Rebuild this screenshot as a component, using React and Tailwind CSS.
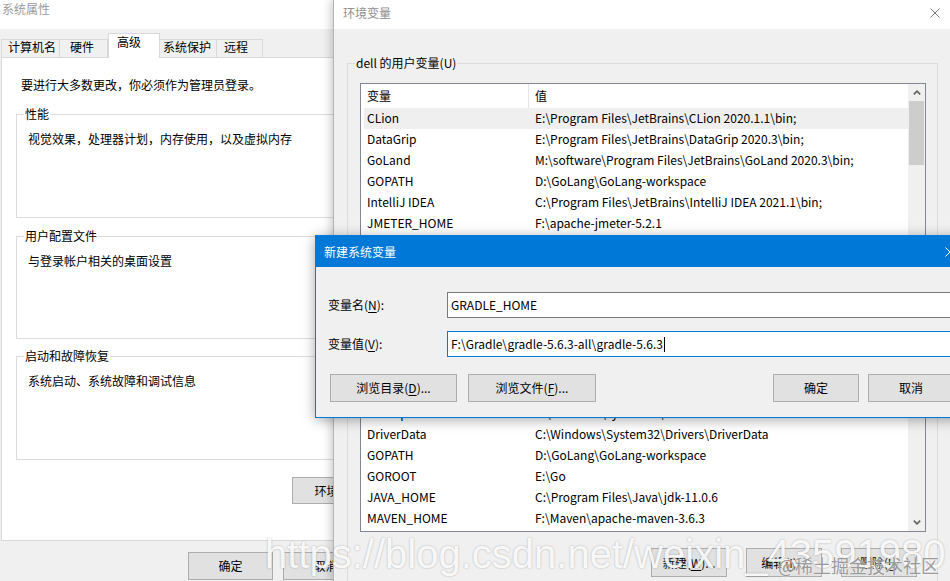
import React from 'react';

const userVars = [
  ['CLion', 'E:\\Program Files\\JetBrains\\CLion 2020.1.1\\bin;'],
  ['DataGrip', 'E:\\Program Files\\JetBrains\\DataGrip 2020.3\\bin;'],
  ['GoLand', 'M:\\software\\Program Files\\JetBrains\\GoLand 2020.3\\bin;'],
  ['GOPATH', 'D:\\GoLang\\GoLang-workspace'],
  ['IntelliJ IDEA', 'C:\\Program Files\\JetBrains\\IntelliJ IDEA 2021.1\\bin;'],
  ['JMETER_HOME', 'F:\\apache-jmeter-5.2.1'],
  ['OneDrive', 'C:\\Users\\dell\\OneDrive'],
  ['Path', 'C:\\Users\\dell\\AppData\\Local\\Microsoft\\WindowsApps;'],
];

const systemVars = [
  ['ComSpec', 'C:\\Windows\\system32\\cmd.exe'],
  ['DriverData', 'C:\\Windows\\System32\\Drivers\\DriverData'],
  ['GOPATH', 'D:\\GoLang\\GoLang-workspace'],
  ['GOROOT', 'E:\\Go'],
  ['JAVA_HOME', 'C:\\Program Files\\Java\\jdk-11.0.6'],
  ['MAVEN_HOME', 'F:\\Maven\\apache-maven-3.6.3'],
];

const Key = ({ children }) => <span className="underline underline-offset-[2px]">{children}</span>;

const Button = ({ className = '', children }) => (
  <div className={`flex shrink-0 items-center justify-center border border-[#adadad] bg-[#e1e1e1] whitespace-nowrap ${className}`}>
    {children}
  </div>
);

const Chevron = ({ down }) => (
  <svg width="8" height="5" viewBox="0 0 8 5" className={down ? 'rotate-180' : ''}>
    <path d="M0.8 4.4 L4 1.2 L7.2 4.4" fill="none" stroke="#606060" strokeWidth="1.6" />
  </svg>
);

const CloseX = ({ color }) => (
  <svg width="10" height="10" viewBox="0 0 10 10">
    <path d="M0.5 0.5 L9.5 9.5 M9.5 0.5 L0.5 9.5" stroke={color} strokeWidth="1" />
  </svg>
);

const Group = ({ title, text, className = '' }) => (
  <fieldset className={`shrink-0 border border-[#dcdcdc] px-[7px] ${className}`}>
    <legend className="px-[1px]">{title}</legend>
    <p className="mt-[9px] px-[4px]">{text}</p>
  </fieldset>
);

const Row = ({ name, value, selected }) => (
  <div className={`ml-[3px] flex h-[21px] shrink-0 items-center pb-[1px] ${selected ? 'bg-[#efefef]' : ''}`}>
    <div className="w-[164px] shrink-0 whitespace-nowrap pl-[3px]">{name}</div>
    <div className="whitespace-nowrap pl-[7px]">{value}</div>
  </div>
);

const VarList = ({ rows, className = '', toEnd, selected = -1 }) => (
  <div className={`flex border border-[#828790] bg-white ${className}`}>
    <div className="flex min-w-0 flex-1 flex-col overflow-hidden">
      <div className="flex h-[24px] shrink-0">
        <div className="flex w-[168px] items-center border-r border-[#e5e5e5] pb-[1px] pl-[6px]">变量</div>
        <div className="flex items-center pb-[1px] pl-[6px]">值</div>
      </div>
      <div className={`flex min-h-0 flex-1 flex-col overflow-hidden ${toEnd ? 'justify-end pb-[2px]' : ''}`}>
        {rows.map(([n, v], i) => (
          <Row key={n + i} name={n} value={v} selected={i === selected} />
        ))}
      </div>
    </div>
    <div className="flex w-[17px] shrink-0 flex-col bg-[#f0f0f0]">
      <div className="flex h-[17px] items-center justify-center">
        <Chevron />
      </div>
      {toEnd ? (
        <>
          <div className="flex-1" />
          <div className="flex h-[17px] items-center justify-center">
            <Chevron down />
          </div>
        </>
      ) : (
        <div className="mx-[1px] h-[64px] bg-[#cdcdcd]" />
      )}
    </div>
  </div>
);

const tabs = [
  { label: '计算机名', cls: 'w-[59px] border-l pl-[6px]' },
  { label: '硬件', cls: 'w-[48px] pl-[10px]' },
  { label: '高级', active: true },
  { label: '系统保护', cls: 'w-[57px] pl-[3px]' },
  { label: '远程', cls: 'w-[46px] pl-[7px]' },
];

const SystemProperties = () => (
  <div className="absolute left-0 top-0 flex h-[581px] w-[474px] flex-col bg-[#f0f0f0]">
    <div className="h-[29px] shrink-0 bg-white pl-[2px] pt-[1px] text-[#9b9b9b]">系统属性</div>

    {/* Tabs */}
    <div className="mt-[4px] flex h-[24px] shrink-0 items-end pl-[1px]">
      {tabs.map((t) =>
        t.active ? (
          <div
            key={t.label}
            className="relative z-10 -mb-[1px] h-[25px] w-[52px] border-x border-t border-[#d9d9d9] bg-white pl-[8px] pt-[1px] leading-[14px]"
          >
            {t.label}
          </div>
        ) : (
          <div
            key={t.label}
            className={`h-[18px] border-r border-t border-[#d9d9d9] bg-[#f0f0f0] leading-[14px] ${t.cls}`}
          >
            {t.label}
          </div>
        )
      )}
    </div>

    {/* Panel */}
    <div className="ml-[1px] mr-[7px] flex h-[484px] shrink-0 flex-col border border-[#d9d9d9] bg-white px-[14px] pt-[19px]">
      <p className="ml-[5px]">要进行大多数更改，你必须作为管理员登录。</p>
      <Group className="mt-[13px] h-[112px]" title="性能" text="视觉效果，处理器计划，内存使用，以及虚拟内存" />
      <Group className="mt-[10px] h-[111px]" title="用户配置文件" text="与登录帐户相关的桌面设置" />
      <Group className="mt-[9px] h-[112px]" title="启动和故障恢复" text="系统启动、系统故障和调试信息" />
      <Button className="ml-[276px] mt-[17px] h-[27px] w-[120px]">
        环境变量(<Key>N</Key>)...
      </Button>
    </div>

    <div className="mt-[11px] flex justify-end gap-[10px] pr-[11px]">
      <Button className="h-[28px] w-[85px]">确定</Button>
      <Button className="h-[28px] w-[85px]">取消</Button>
      <Button className="h-[28px] w-[85px]">应用(<Key>A</Key>)</Button>
    </div>
  </div>
);

const EnvironmentVariables = () => (
  <div className="absolute left-[333px] top-0 flex h-[581px] w-[620px] flex-col border-l border-[#b4b4b4] bg-[#f0f0f0] shadow-[-3px_0_8px_rgba(0,0,0,0.18)]">
    <div className="flex h-[29px] shrink-0 items-start justify-between bg-white pl-[9px] pr-[13px] pt-[5px] text-[#8f8f8f]">
      <span>环境变量</span>
      <span className="pt-[3px]">
        <CloseX color="#7a7a7a" />
      </span>
    </div>

    <div className="flex flex-1 flex-col pl-[13px] pr-[15px] pt-[26px]">
      <fieldset className="border border-[#dcdcdc] px-[7px] pb-[10px]">
        <legend className="px-[1px]">dell 的用户变量(U)</legend>
        <VarList rows={userVars} selected={0} className="ml-[5px] mr-[4px] mt-[12px] h-[190px]" />
        <div className="mr-[13px] mt-[10px] flex justify-end gap-[19px]">
          <Button className="h-[28px] w-[76px]">新建(<Key>N</Key>)...</Button>
          <Button className="h-[28px] w-[76px]">编辑(<Key>E</Key>)...</Button>
          <Button className="h-[28px] w-[76px]">删除(<Key>D</Key>)</Button>
        </div>
      </fieldset>

      <fieldset className="mt-[10px] border border-[#dcdcdc] px-[7px] pb-[10px]">
        <legend className="px-[1px]">系统变量(S)</legend>
        <VarList rows={systemVars} toEnd className="ml-[5px] mr-[4px] mt-[12px] h-[172px]" />
        <div className="mr-[13px] mt-[16px] flex justify-end gap-[19px]">
          <Button className="h-[29px] w-[76px]">新建(<Key>W</Key>)...</Button>
          <Button className="h-[29px] w-[76px]">编辑(<Key>I</Key>)...</Button>
          <Button className="h-[29px] w-[76px]">删除(<Key>L</Key>)</Button>
        </div>
      </fieldset>
    </div>
  </div>
);

const NewVariableDialog = () => (
  <div className="absolute left-[315px] top-[235px] flex h-[183px] w-[650px] flex-col border border-[#0078d7] bg-[#f0f0f0] shadow-[0_2px_12px_rgba(0,0,0,0.35)]">
    <div className="flex h-[31px] shrink-0 items-center justify-between bg-[#0078d7] pl-[8px] pr-[9px] text-white">
      <span>新建系统变量</span>
      <CloseX color="#ffffff" />
    </div>

    <div className="flex flex-col pl-[12px] pr-[10px] pt-[25px]">
      <div className="flex items-center">
        <div className="w-[119px] shrink-0">
          变量名(<Key>N</Key>):
        </div>
        <div className="flex h-[26px] flex-1 items-center border border-[#7a7a7a] bg-white pl-[3px]">GRADLE_HOME</div>
      </div>
      <div className="mt-[13px] flex items-center">
        <div className="w-[119px] shrink-0">
          变量值(<Key>V</Key>):
        </div>
        <div className="flex h-[26px] flex-1 items-center border border-[#0078d7] bg-white pl-[3px]">
          <span>F:\Gradle\gradle-5.6.3-all\gradle-5.6.3</span>
          <span className="ml-[1px] h-[15px] w-[1px] bg-black" />
        </div>
      </div>
      <div className="mt-[17px] flex justify-between">
        <div className="ml-[2px] flex gap-[11px]">
          <Button className="h-[28px] w-[127px]">浏览目录(<Key>D</Key>)...</Button>
          <Button className="h-[28px] w-[128px]">浏览文件(<Key>F</Key>)...</Button>
        </div>
        <div className="flex gap-[9px]">
          <Button className="h-[28px] w-[86px]">确定</Button>
          <Button className="h-[28px] w-[86px]">取消</Button>
        </div>
      </div>
    </div>
  </div>
);

export default function App() {
  return (
    <div className="relative h-[581px] w-[950px] overflow-hidden bg-white font-['Microsoft_YaHei_UI','Noto_Sans_CJK_SC',sans-serif] text-[12px] leading-[16px] text-black">
      <SystemProperties />
      <EnvironmentVariables />
      <NewVariableDialog />

      {/* watermarks */}
      <div className="pointer-events-none absolute left-[265px] top-[534px] whitespace-nowrap font-['Liberation_Sans',Arial,sans-serif] text-[40px] leading-[40px] text-white/90 [text-shadow:0_0_2px_rgba(0,0,0,0.3)]">
        https://blog.csdn.net/weixin_43591980
      </div>
      <div className="pointer-events-none absolute left-[778px] top-[554px] whitespace-nowrap text-[18px] leading-[22px] text-[#9a9a9a] [text-shadow:0_0_2px_#ffffff]">
        @稀土掘金技术社区
      </div>
    </div>
  );
}
